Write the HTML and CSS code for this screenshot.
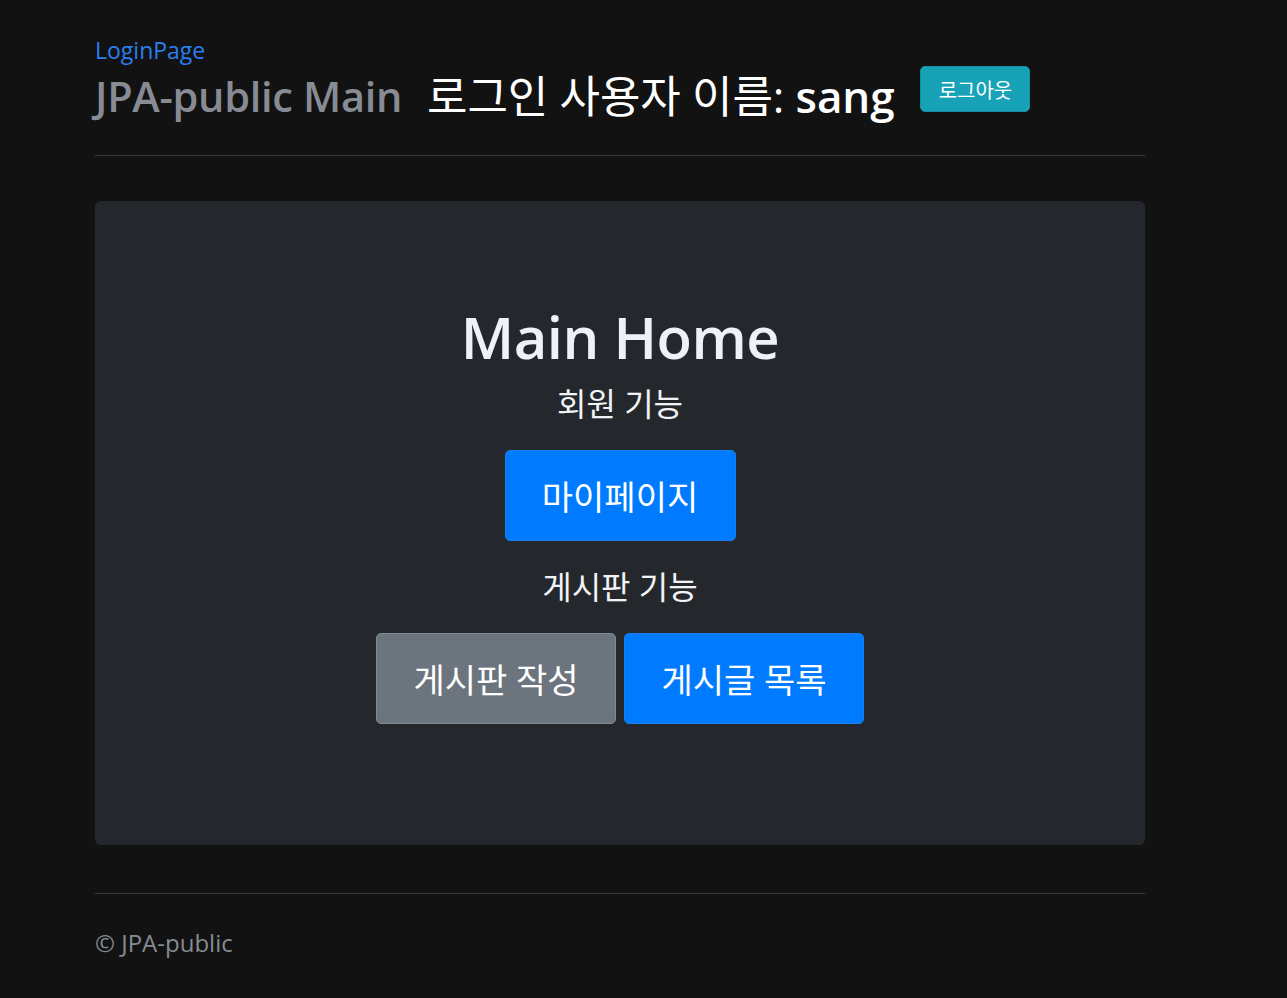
FILE: index.html
```html
<!DOCTYPE html>
<html lang="ko">
<head>
<meta charset="utf-8">
<title>JPA-public Main</title>
<link rel="stylesheet" href="styles.css">
</head>
<body>
<div class="container">
  <header class="header">
    <a class="login-link" href="#">LoginPage</a>
    <div class="title-row">
      <h1 class="brand">JPA-public Main</h1>
      <h2 class="user">로그인 사용자 이름: <b>sang</b></h2>
      <button class="btn btn-info">로그아웃</button>
    </div>
  </header>
  <hr class="rule">
  <main class="jumbotron">
    <h1 class="main-title">Main Home</h1>
    <p class="section">회원 기능</p>
    <div class="btn-row">
      <button class="btn btn-lg btn-primary btn-mypage">마이페이지</button>
    </div>
    <p class="section">게시판 기능</p>
    <div class="btn-row">
      <button class="btn btn-lg btn-secondary">게시판 작성</button>
      <button class="btn btn-lg btn-primary">게시글 목록</button>
    </div>
  </main>
  <hr class="rule footer-rule">
  <footer class="footer">© JPA-public</footer>
</div>
</body>
</html>
```

FILE: styles.css
```css
html, body {
  margin: 0;
  padding: 0;
  background: #121212;
}
body {
  font-family: "Open Sans", "Noto Sans CJK KR", sans-serif;
  color: #f1f3f7;
  min-height: 998px;
}
.container {
  width: 1050px;
  margin-left: 95px;
  padding-top: 36px;
}
.header {
  display: flex;
  flex-direction: column;
}
.login-link {
  color: #2a7ff0;
  text-decoration: none;
  font-size: 23px;
  line-height: 28px;
}
.title-row {
  display: flex;
  align-items: flex-start;
  margin-top: 4px;
}
.brand {
  margin: 0;
  font-size: 41.5px;
  font-weight: 600;
  color: #878c94;
  line-height: 56px;
  letter-spacing: -0.3px;
}
.user {
  margin: 0 0 0 25px;
  font-size: 44px;
  font-weight: 400;
  color: #ffffff;
  line-height: 56px;
  letter-spacing: -0.1px;
}
.user b {
  font-weight: 600;
}
.btn {
  font-family: "Open Sans", "Noto Sans CJK KR", sans-serif;
  border: 1px solid transparent;
  border-radius: 5px;
  color: #ffffff;
  cursor: pointer;
}
.btn-info {
  margin: -2px 0 0 26px;
  background: #17a2b8;
  border-color: #16909f;
  font-size: 20px;
  width: 110px;
  height: 46px;
  padding: 0;
}
.rule {
  border: 0;
  border-top: 1px solid #3a3b3d;
  margin: 31px 0 45px;
}
.jumbotron {
  background: #24282c;
  border-radius: 6px;
  height: 644px;
  box-sizing: border-box;
  padding-top: 98px;
  display: flex;
  flex-direction: column;
  align-items: center;
}
.main-title {
  margin: 0;
  font-size: 58px;
  font-weight: 600;
  line-height: 76px;
  color: #eef1f7;
  letter-spacing: -0.5px;
}
.section {
  margin: 7px 0 0;
  font-size: 32px;
  line-height: 44px;
  color: #f1f3f7;
}
.btn-row {
  display: flex;
  gap: 8px;
  margin: 24px 0 17px;
}
.btn-lg {
  font-size: 34px;
  height: 91px;
  width: 240px;
  padding: 0;
}
.btn-mypage {
  width: 231px;
}
.btn-primary {
  background: #007bff;
  border-color: #1a7ff0;
}
.btn-secondary {
  background: #6c757d;
  border-color: #838a91;
}
.footer-rule {
  margin: 48px 0 0;
}
.footer {
  font-size: 24px;
  color: #868b92;
  padding-top: 32px;
}
```
